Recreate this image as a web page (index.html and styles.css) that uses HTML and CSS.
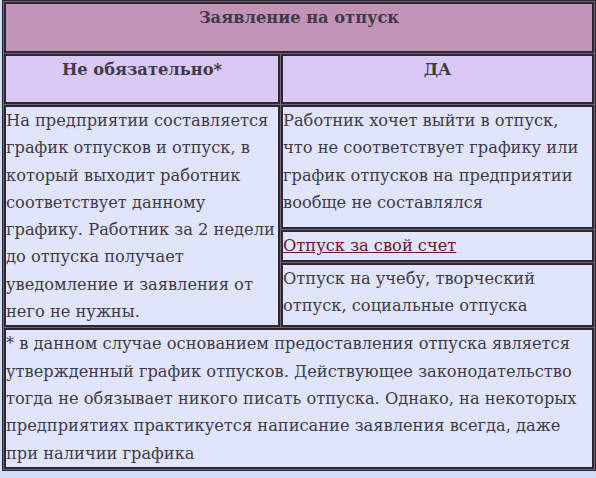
FILE: index.html
```html
<!DOCTYPE html>
<html lang="ru">
<head>
<meta charset="utf-8">
<link rel="stylesheet" href="styles.css">
</head>
<body>
<table class="leave">
  <tr class="row-title">
    <th colspan="2" class="title">Заявление на отпуск</th>
  </tr>
  <tr class="row-head">
    <th class="head left">Не обязательно*</th>
    <th class="head">ДА</th>
  </tr>
  <tr>
    <td rowspan="3" class="cell left">На предприятии составляется график отпусков и отпуск, в который выходит работник соответствует данному графику. Работник за 2 недели до отпуска получает уведомление и заявления от него не нужны.</td>
    <td class="cell cell-tall">Работник хочет выйти в отпуск, что не соответствует графику или график отпусков на предприятии вообще не составлялся</td>
  </tr>
  <tr>
    <td class="cell cell-link"><a class="link" href="#">Отпуск за свой счет</a></td>
  </tr>
  <tr>
    <td class="cell cell-other">Отпуск на учебу, творческий отпуск, социальные отпуска</td>
  </tr>
  <tr>
    <td colspan="2" class="cell note">* в данном случае основанием предоставления отпуска является утвержденный график отпусков. Действующее законодательство тогда не обязывает никого писать отпуска. Однако, на некоторых предприятиях практикуется написание заявления всегда, даже при наличии графика</td>
  </tr>
</table>
</body>
</html>
```
FILE: styles.css
```css
html, body {
  margin: 0;
  padding: 0;
  background: #d3def4;
}
body {
  padding-left: 2px;
  font-family: "DejaVu Serif", serif;
  font-size: 16.25px;
  line-height: 27.3px;
  color: #3e3a48;
}
.leave {
  width: 594px;
  border-collapse: separate;
  border-spacing: 1px;
  background: #6c6874;
  border: 1px solid #2c2230;
}
.leave th, .leave td {
  border: 2px solid #302633;
  vertical-align: top;
  padding: 0;
}
.title {
  background: #c194b7;
  height: 47px;
  padding: 2px 4px 0;
  font-weight: bold;
  text-align: center;
}
.head {
  background: #dac8f5;
  height: 46px;
  padding: 3px 4px 0;
  font-weight: bold;
  text-align: center;
}
.left {
  width: 272px;
}
.cell {
  background: #e1e5fb;
  padding: 4px 0 0 0;
  text-align: left;
}
.cell-tall {
  height: 118px;
}
.cell-link {
  height: 25px;
}
.cell-other {
  height: 59px;
}
.link {
  color: #6b1630;
  text-decoration: underline;
}
.note {
  height: 126px;
  padding-top: 10px;
}
```
